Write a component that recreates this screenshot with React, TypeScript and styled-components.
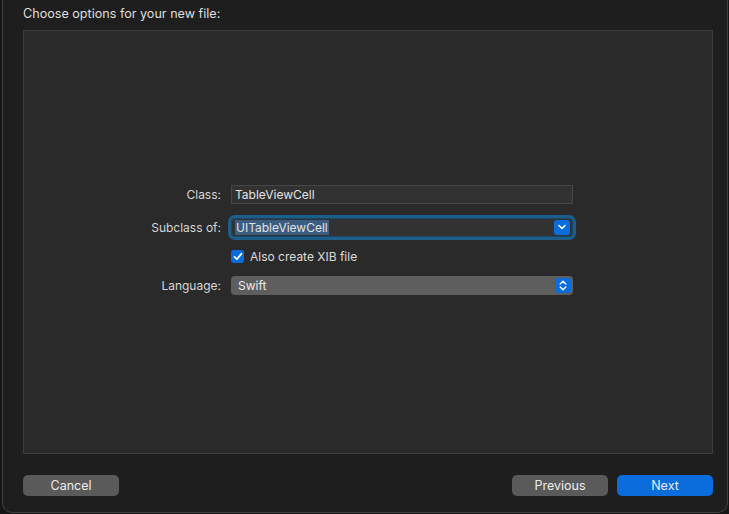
import styled, { createGlobalStyle } from "styled-components";

const GlobalStyle = createGlobalStyle`
  html, body {
    margin: 0;
    padding: 0;
    background: #161616;
    font-family: Inter, "Liberation Sans", Arial, sans-serif;
    -webkit-font-smoothing: antialiased;
  }
`;

const Window = styled.div`
  box-sizing: border-box;
  margin-left: 2px;
  width: 726px;
  height: 513px;
  background: #1e1e1e;
  border: 1px solid #3e3e3e;
  border-top: none;
  border-radius: 0 0 10px 10px;
  padding: 0 14px 16px 20px;
  display: flex;
  flex-direction: column;
  color: #dcdcdc;
  font-size: 12px;
`;

const Title = styled.div`
  height: 30px;
  display: flex;
  align-items: center;
  padding-bottom: 4px;
  box-sizing: border-box;
  font-size: 12.6px;
  color: #dedede;
`;

const Panel = styled.div`
  flex: 1;
  background: #2a2a2a;
  border: 1px solid #3c3c3c;
  display: flex;
  flex-direction: column;
  justify-content: center;
  padding-bottom: 5px;
`;

const FormRow = styled.div<{ $gap?: number }>`
  display: grid;
  grid-template-columns: 197px 342px;
  column-gap: 10px;
  align-items: center;
  margin-top: ${(p) => p.$gap ?? 0}px;
`;

const Label = styled.div`
  text-align: right;
  font-size: 12px;
  color: #d6d6d6;
`;

const TextField = styled.div<{ $focused?: boolean }>`
  box-sizing: border-box;
  height: 19px;
  background: #323232;
  border: 1px solid ${(p) => (p.$focused ? "#16496c" : "#474747")};
  border-radius: ${(p) => (p.$focused ? "4px" : "0")};
  box-shadow: ${(p) => (p.$focused ? "0 0 0 3px #1c5d8a" : "none")};
  display: flex;
  align-items: center;
  padding: 0 2px 0 3px;
  font-size: 12px;
  color: #e2e2e2;
`;

const Selected = styled.span`
  background: #3b5d82;
  padding: 0 1px;
`;

const Grow = styled.div`
  flex: 1;
`;

const BlueKnob = styled.div`
  width: 16px;
  height: 15px;
  border-radius: 3px;
  background: #0b6ddc;
  display: flex;
  align-items: center;
  justify-content: center;
`;

const PopUp = styled.div`
  box-sizing: border-box;
  height: 19px;
  background: #5e5e5e;
  border-radius: 4px;
  display: flex;
  align-items: center;
  padding: 0 2px 0 7px;
  font-size: 12px;
  color: #ececec;
`;

const CheckRow = styled.div`
  display: flex;
  align-items: center;
  gap: 6px;
  font-size: 12px;
  color: #dcdcdc;
`;

const CheckBox = styled.div`
  width: 13px;
  height: 13px;
  border-radius: 3px;
  background: #0b6ddc;
  display: flex;
  align-items: center;
  justify-content: center;
`;

const Footer = styled.div`
  display: flex;
  align-items: center;
  gap: 9px;
  margin-top: 21px;
`;

const Button = styled.button<{ $primary?: boolean }>`
  width: 96px;
  height: 21px;
  border: none;
  border-radius: 5px;
  background: ${(p) => (p.$primary ? "#0a6ddb" : "#5a5a5a")};
  color: #ececec;
  font-family: inherit;
  font-size: 12.5px;
  padding: 0;
`;

const Chevron = () => (
  <svg width="8" height="6" viewBox="0 0 8 6">
    <path d="M1 1.5 L4 4.5 L7 1.5" fill="none" stroke="#fff" strokeWidth="1.5" strokeLinecap="round" strokeLinejoin="round" />
  </svg>
);

const UpDown = () => (
  <svg width="8" height="11" viewBox="0 0 8 11">
    <path d="M1.2 4 L4 1.3 L6.8 4 M1.2 7 L4 9.7 L6.8 7" fill="none" stroke="#fff" strokeWidth="1.4" strokeLinecap="round" strokeLinejoin="round" />
  </svg>
);

const Check = () => (
  <svg width="10" height="9" viewBox="0 0 10 9">
    <path d="M1.5 4.8 L3.9 7.2 L8.5 1.6" fill="none" stroke="#fff" strokeWidth="1.7" strokeLinecap="round" strokeLinejoin="round" />
  </svg>
);

export default function App() {
  return (
    <>
      <GlobalStyle />
      <Window>
        <Title>Choose options for your new file:</Title>
        <Panel>
          <FormRow>
            <Label>Class:</Label>
            <TextField>TableViewCell</TextField>
          </FormRow>
          <FormRow $gap={14}>
            <Label>Subclass of:</Label>
            <TextField $focused>
              <Selected>UITableViewCell</Selected>
              <Grow />
              <BlueKnob>
                <Chevron />
              </BlueKnob>
            </TextField>
          </FormRow>
          <FormRow $gap={12}>
            <div />
            <CheckRow>
              <CheckBox>
                <Check />
              </CheckBox>
              Also create XIB file
            </CheckRow>
          </FormRow>
          <FormRow $gap={12}>
            <Label>Language:</Label>
            <PopUp>
              Swift
              <Grow />
              <BlueKnob>
                <UpDown />
              </BlueKnob>
            </PopUp>
          </FormRow>
        </Panel>
        <Footer>
          <Button>Cancel</Button>
          <Grow />
          <Button>Previous</Button>
          <Button $primary>Next</Button>
        </Footer>
      </Window>
    </>
  );
}
